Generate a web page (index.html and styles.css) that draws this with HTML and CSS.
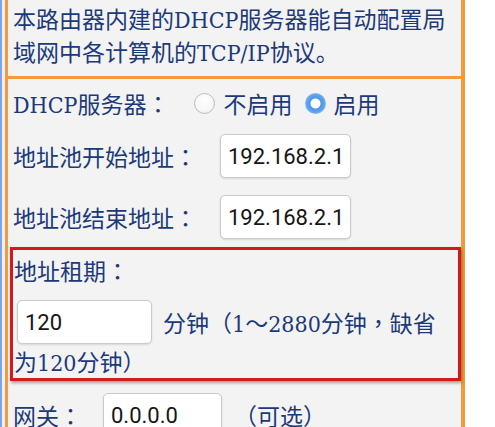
FILE: index.html
```html
<!DOCTYPE html>
<html lang="zh-CN">
<head>
<meta charset="utf-8">
<title>DHCP服务器</title>
<link rel="stylesheet" href="styles.css">
</head>
<body>
<div class="frame">
  <div class="panel">
    <div class="intro">本路由器内建的DHCP服务器能自动配置局域网中各计算机的TCP/IP协议。</div>
    <div class="form">
      <div class="row row-dhcp">
        <span class="label">DHCP服务器<span class="pn" lang="zh-TW">：</span></span>
        <label class="opt opt-off"><input type="radio" name="dhcp" class="radio"><span>不启用</span></label>
        <label class="opt opt-on"><input type="radio" name="dhcp" class="radio" checked><span>启用</span></label>
      </div>
      <div class="row row-start">
        <span class="label">地址池开始地址<span class="pn" lang="zh-TW">：</span></span>
        <input class="field field-ip" type="text" value="192.168.2.100">
      </div>
      <div class="row row-end">
        <span class="label">地址池结束地址<span class="pn" lang="zh-TW">：</span></span>
        <input class="field field-ip" type="text" value="192.168.2.199">
      </div>
      <div class="lease">
        <div class="lease-title">地址租期<span class="pn" lang="zh-TW">：</span></div>
        <div class="lease-row">
          <input class="field field-lease" type="text" value="120">
          <span class="lease-text">分钟<span class="pn" lang="zh-TW">（</span>1<span class="pn" lang="zh-TW">～</span>2880分钟<span class="pn" lang="zh-TW">，</span>缺省</span>
        </div>
        <div class="lease-note">为120分钟<span class="pn" lang="zh-TW">）</span></div>
      </div>
      <div class="row row-gw">
        <span class="label">网关<span class="pn" lang="zh-TW">：</span></span>
        <input class="field field-gw" type="text" value="0.0.0.0">
        <span class="hint"><span class="pn" lang="zh-TW">（</span>可选<span class="pn" lang="zh-TW">）</span></span>
      </div>
    </div>
  </div>
</div>
</body>
</html>
```
FILE: styles.css
```css
html, body {
  margin: 0;
  padding: 0;
  background: #ffffff;
  overflow: hidden;
}

.frame {
  border-left: 2px solid #7ea4e4;
  padding-left: 3px;
  background: #eef0f5;
  width: 460px;
  height: 427px;
}

.panel {
  border-left: 3px solid #f59a3c;
  border-right: 4px solid #f59a3c;
  background: #f3f3f4;
  height: 427px;
  font-family: "DejaVu Serif", "Liberation Serif", "Noto Sans CJK SC", serif;
  font-stretch: condensed;
  font-size: 23px;
  color: #1c3a7a;
}

.pn {
  font-family: "Noto Sans CJK TC", "Noto Sans CJK SC", sans-serif;
  font-stretch: normal;
}

.intro {
  padding: 4px 4px 6px 5px;
  line-height: 33px;
  border-bottom: 3px solid #f59a3c;
}

.form {
  padding-left: 5px;
  display: flex;
  flex-direction: column;
}

.row {
  display: flex;
  align-items: center;
  height: 44px;
  white-space: nowrap;
}

.row-dhcp { margin-top: 2px; }
.row-start { margin-top: 9px; }
.row-end { margin-top: 17px; }
.row-gw { margin-top: 12px; }

.opt {
  display: flex;
  align-items: center;
}

.opt-off { margin-left: 25px; }
.opt-on { margin-left: 13px; }

.radio {
  -webkit-appearance: none;
  appearance: none;
  margin: 0;
  width: 21px;
  height: 21px;
  border-radius: 50%;
  box-sizing: border-box;
  border: 1px solid #bdbdbd;
  background: radial-gradient(circle at 50% 35%, #ffffff 0%, #f6f6f6 65%, #e2e2e2 100%);
}

.opt-off .radio { margin-right: 8px; }
.opt-on .radio { margin-right: 7px; }

.radio:checked {
  border: none;
  background: radial-gradient(circle, #ffffff 0 4.5px, #4f95e4 5.5px, #62a4ee 9px, #8dbdf2 10.5px);
}

.field {
  box-sizing: border-box;
  height: 44px;
  margin: 0;
  padding: 0 7px;
  border: 1px solid #cacaca;
  border-radius: 5px;
  background: #ffffff;
  box-shadow: 0 1px 2px rgba(0, 0, 0, 0.12);
  font-family: Roboto, "Liberation Sans", sans-serif;
  font-size: 22px;
  color: #151515;
  outline: none;
}

.field-ip {
  width: 131px;
  margin-left: 23px;
}

.field-lease {
  width: 135px;
}

.field-gw {
  width: 119px;
  margin-left: 21px;
}

.hint {
  margin-left: 12px;
}

.lease {
  margin: 8px 0 0 -3px;
  border: 3px solid #d3191d;
  box-shadow: 1px 2px 3px rgba(0, 0, 0, 0.35);
  padding-left: 1px;
  height: 128px;
}

.lease-title {
  height: 40px;
  line-height: 40px;
}

.lease-row {
  display: flex;
  align-items: center;
  height: 44px;
  margin-top: 10px;
  padding-left: 3px;
  white-space: nowrap;
}

.lease-text {
  margin-left: 11px;
}

.lease-note {
  line-height: 34px;
}
```
